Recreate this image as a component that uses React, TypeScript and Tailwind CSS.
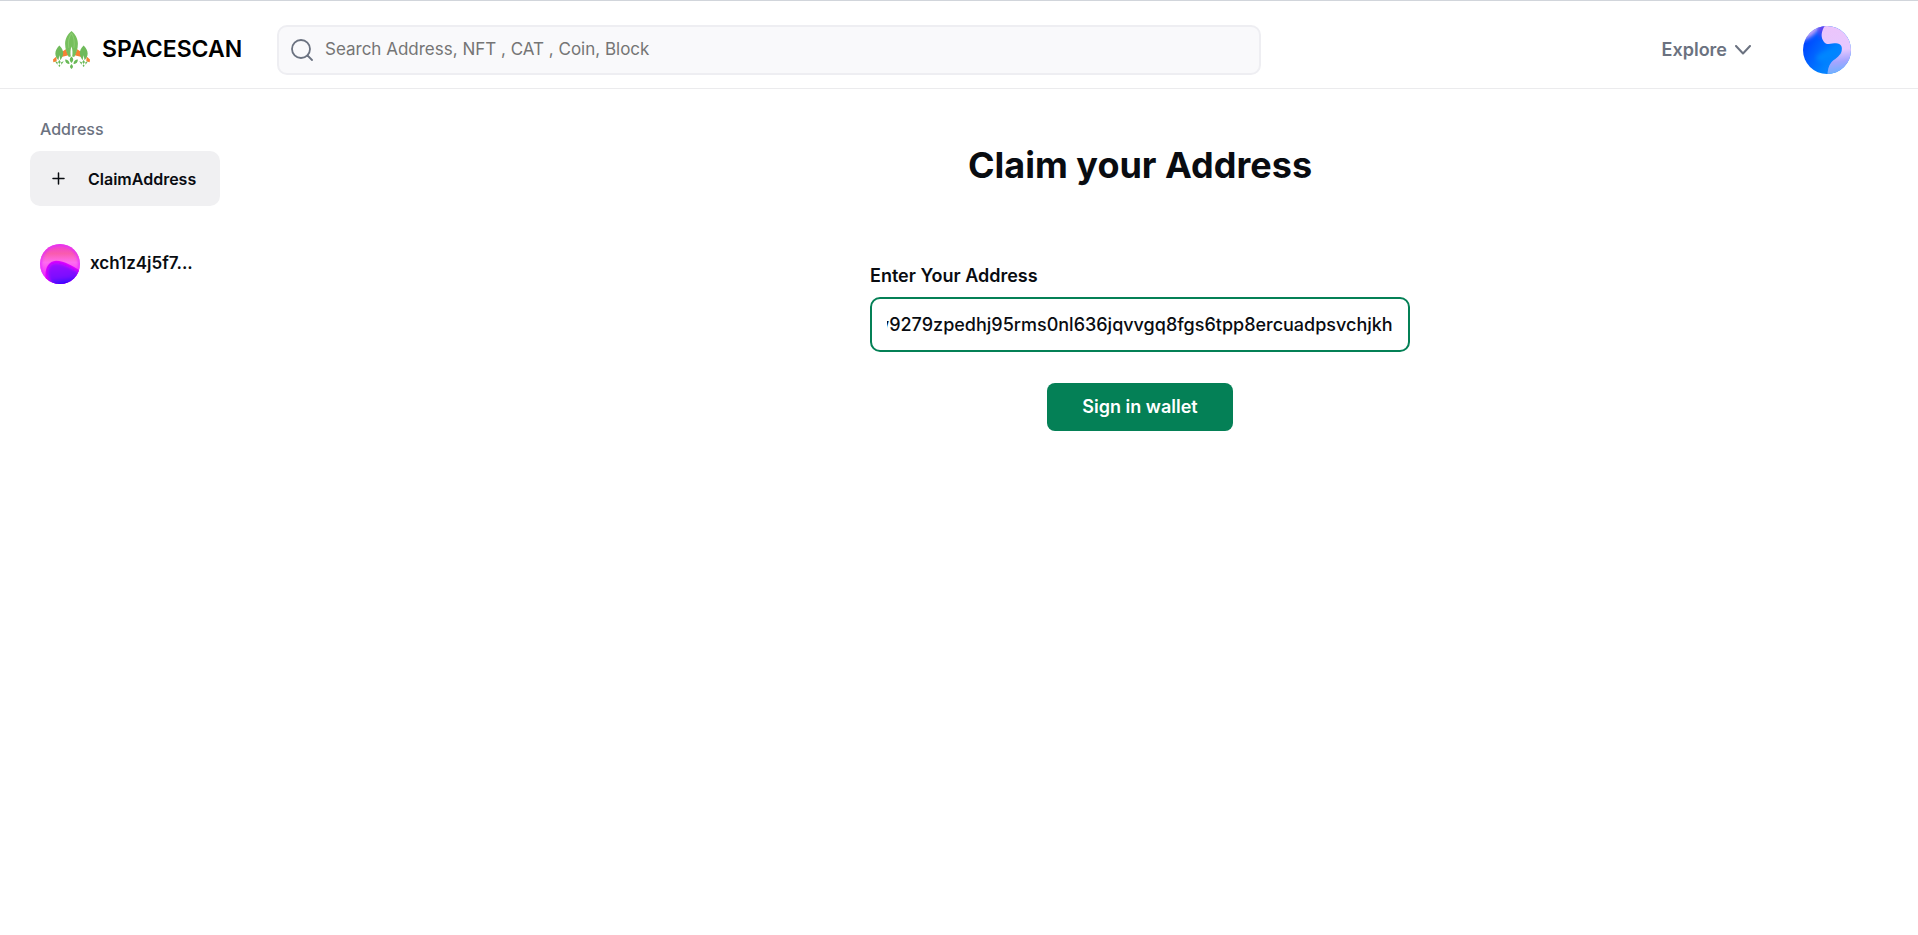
import { useLayoutEffect, useRef, useState } from "react";

function Logo() {
  return (
    <svg viewBox="0 0 110 113" className="h-[38px] w-[37px] shrink-0" aria-hidden="true">
      <path d="M38 54 L25 63 L25 77 L46 72 Z M72 54 L85 63 L85 77 L64 72 Z" fill="#f58233" />
      <path d="M10 76 L0 85 L1 93 L11 90 Z M100 76 L110 85 L109 93 L99 90 Z" fill="#f58233" />
      <path d="M55 0 C66 9 74 22 74 38 C74 54 69 67 63 77 L57 76 C59 66 58 54 55 46 C52 54 51 66 53 76 L47 77 C41 67 36 54 36 38 C36 22 44 9 55 0 Z" fill="#76bf5d" />
      <path d="M55 6 C62 18 65 33 62 50 M55 6 C46 20 44 32 47 50" fill="none" stroke="#8ccc74" strokeWidth="3" />
      <path d="M19 43 C27 50 31 59 30 68 C29 76 26 82 22 87 L19 72 L16 87 C11 82 7 75 7 67 C7 58 12 50 19 43 Z" fill="#6fba5b" />
      <path d="M91 43 C98 50 103 58 103 67 C103 75 99 82 94 87 L91 72 L88 87 C84 82 81 76 80 68 C79 59 83 50 91 43 Z" fill="#6fba5b" />
      <path d="M55 76 C62 82 62 89 55 95 C48 89 48 82 55 76 Z M55 98 C61 104 61 108 55 113 C49 108 49 104 55 98 Z" fill="#69b957" />
      <path d="M36 85 C44 85 49 90 49 98 C41 99 36 94 36 85 Z M74 85 C66 85 61 90 61 98 C69 99 74 94 74 85 Z" fill="#69b957" />
      <path d="M19 86 L23 92 L19 98 L15 92 Z M19 99 L22 103 L19 107 L16 103 Z M6 90 L14 93 L13 100 Z M32 90 L24 93 L25 100 Z" fill="#69b957" />
      <path d="M91 86 L95 92 L91 98 L87 92 Z M91 99 L94 103 L91 107 L88 103 Z M78 90 L86 93 L85 100 Z M104 90 L96 93 L97 100 Z" fill="#69b957" />
    </svg>
  );
}

function BlueAvatar() {
  return (
    <svg viewBox="0 0 144 144" className="size-12" aria-hidden="true">
      <defs>
        <clipPath id="blue-clip"><circle cx="72" cy="72" r="72" /></clipPath>
        <linearGradient id="blue-base" x1="0" y1="0.3" x2="1" y2="0.9">
          <stop offset="0" stopColor="#0040ff" />
          <stop offset="0.55" stopColor="#0080ff" />
          <stop offset="1" stopColor="#1c8cff" />
        </linearGradient>
        <linearGradient id="blue-pink" x1="0.5" y1="0" x2="0.6" y2="1">
          <stop offset="0" stopColor="#ecc4fb" />
          <stop offset="0.5" stopColor="#e6c8ff" />
          <stop offset="0.72" stopColor="#a5a5ff" />
          <stop offset="1" stopColor="#5eb4ff" />
        </linearGradient>
        <filter id="blue-soft"><feGaussianBlur stdDeviation="7" /></filter>
        <filter id="blue-edge"><feGaussianBlur stdDeviation="1.5" /></filter>
      </defs>
      <g clipPath="url(#blue-clip)">
        <rect width="144" height="144" fill="url(#blue-base)" />
        <path d="M-5 45 C15 38 40 26 58 -8 L-5 -8 Z" fill="#d0a8f7" filter="url(#blue-soft)" />
        <path d="M46 -5 L76 -5 L60 18 C56 26 55 32 56 40 C46 24 50 12 46 -5 Z" fill="#6f3cee" filter="url(#blue-soft)" />
        <path d="M68 -5 C54 16 52 34 63 48 C72 59 86 52 99 52 C114 52 120 64 115 78 C110 92 94 99 84 110 C76 120 74 132 73 150 L150 150 L150 -5 Z" fill="url(#blue-pink)" filter="url(#blue-edge)" />
        <path d="M40 92 C62 72 90 68 110 66 C110 84 84 94 68 106 C56 110 42 106 40 92 Z" fill="#0086ff" filter="url(#blue-soft)" />
      </g>
    </svg>
  );
}

function PinkAvatar() {
  return (
    <svg viewBox="0 0 120 120" className="size-10 shrink-0" aria-hidden="true">
      <defs>
        <clipPath id="pink-clip"><circle cx="60" cy="60" r="60" /></clipPath>
        <linearGradient id="pink-base" x1="0" y1="0" x2="0" y2="1">
          <stop offset="0" stopColor="#ef3cd8" />
          <stop offset="0.24" stopColor="#f95cae" />
          <stop offset="0.46" stopColor="#ff6cf0" />
          <stop offset="1" stopColor="#ee10ff" />
        </linearGradient>
        <linearGradient id="pink-violet" x1="0.4" y1="0" x2="0.6" y2="1">
          <stop offset="0" stopColor="#9a10ff" />
          <stop offset="0.6" stopColor="#7a10ff" />
          <stop offset="1" stopColor="#1400ff" />
        </linearGradient>
        <filter id="pink-soft"><feGaussianBlur stdDeviation="4" /></filter>
        <filter id="pink-edge"><feGaussianBlur stdDeviation="2" /></filter>
      </defs>
      <g clipPath="url(#pink-clip)">
        <rect width="120" height="120" fill="url(#pink-base)" />
        <circle cx="60" cy="60" r="60" fill="none" stroke="#e42cff" strokeWidth="9" filter="url(#pink-soft)" />
        <path d="M18 112 C12 78 22 52 48 50 C74 51 98 66 124 82 L112 132 L24 132 Z" fill="#e000ff" filter="url(#pink-edge)" />
        <path d="M34 118 C18 90 20 60 46 58 C70 58 90 72 118 86 L104 126 L48 126 Z" fill="url(#pink-violet)" filter="url(#pink-soft)" />
      </g>
    </svg>
  );
}

function Header() {
  return (
    <header className="flex h-[89px] items-center border-t border-b border-t-[#d1d5db] border-b-[#ebebed] pt-[10px] pr-[67px] pl-[53px]">
      <a href="#home" className="mr-9 flex w-[188px] shrink-0 items-center gap-3 text-[23px] font-semibold text-black">
        <Logo />
        SPACESCAN
      </a>
      <label className="flex h-[50px] max-w-[984px] flex-1 items-center gap-3 rounded-[10px] border-2 border-[#eeeef2] bg-[#f9f9fb] px-3">
        <svg viewBox="0 0 22 22" className="size-[22px] shrink-0" fill="none" stroke="#6b7280" strokeWidth="1.8" strokeLinecap="round" aria-hidden="true">
          <circle cx="10" cy="10" r="9" />
          <path d="M16.5 16.5 L21 21" />
        </svg>
        <input
          type="search"
          aria-label="Search"
          placeholder="Search Address, NFT , CAT , Coin, Block"
          className="min-w-0 flex-1 bg-transparent text-[17px] text-gray-800 outline-none placeholder:text-[#757575]"
        />
      </label>
      <nav className="ml-auto flex items-center gap-[52px]">
        <button type="button" className="flex items-center gap-2 text-lg font-semibold text-[#6b7280]">
          Explore
          <svg viewBox="0 0 16 10" className="h-[10px] w-4" fill="none" stroke="currentColor" strokeWidth="2" strokeLinecap="round" strokeLinejoin="round" aria-hidden="true">
            <path d="M1 1 L8 8.500 L15 1" />
          </svg>
        </button>
        <button type="button" aria-label="Account" className="rounded-full">
          <BlueAvatar />
        </button>
      </nav>
    </header>
  );
}

function Sidebar() {
  return (
    <aside className="w-[362px] shrink-0 pt-7 pl-[30px]">
      <h2 className="pl-[10px] text-base leading-6 font-medium text-[#6b7280]">Address</h2>
      <button type="button" className="mt-[10px] flex h-[55px] w-[190px] items-center gap-[23px] rounded-[10px] bg-[#f0f0f2] pl-[22px] text-base font-semibold text-[#090c11]">
        <svg viewBox="0 0 13 13" className="size-[13px]" stroke="currentColor" strokeWidth="1.5" strokeLinecap="round" aria-hidden="true">
          <path d="M6.500 1 V12 M1 6.500 H12" />
        </svg>
        ClaimAddress
      </button>
      <a href="#xch1z4j5f7" className="mt-[38px] flex items-center gap-[10px] pl-[10px] text-[17px] font-semibold text-[#090c11]">
        <PinkAvatar />
        xch1z4j5f7...
      </a>
    </aside>
  );
}

function ClaimForm() {
  const field = useRef<HTMLInputElement>(null);
  const [address, setAddress] = useState("xch1z4j5f7w9279zpedhj95rms0nl636jqvvgq8fgs6tpp8ercuadpsvchjkh");

  useLayoutEffect(() => {
    if (field.current) field.current.scrollLeft = field.current.scrollWidth;
  }, []);

  return (
    <main className="flex flex-1 flex-col items-center px-4 pt-[51px]">
      <h1 className="text-4xl leading-[50px] font-bold text-[#090c11]">Claim your Address</h1>
      <form className="mt-[72px] flex w-full max-w-[540px] flex-col" onSubmit={(event) => event.preventDefault()}>
        <label htmlFor="address" className="text-lg leading-7 font-semibold text-[#090c11]">
          Enter Your Address
        </label>
        <input
          id="address"
          ref={field}
          type="text"
          value={address}
          onChange={(event) => setAddress(event.target.value)}
          className="mt-[7px] h-[55px] rounded-[10px] border-2 border-[#048056] bg-white px-[15px] text-lg font-medium text-[#090c11] outline-none"
        />
        <button type="submit" className="mt-[31px] h-12 w-[186px] self-center rounded-lg bg-[#048056] text-lg font-semibold text-white">
          Sign in wallet
        </button>
      </form>
    </main>
  );
}

export default function App() {
  return (
    <div className="min-h-screen bg-white font-['Inter',sans-serif]">
      <Header />
      <div className="flex">
        <Sidebar />
        <ClaimForm />
      </div>
    </div>
  );
}
